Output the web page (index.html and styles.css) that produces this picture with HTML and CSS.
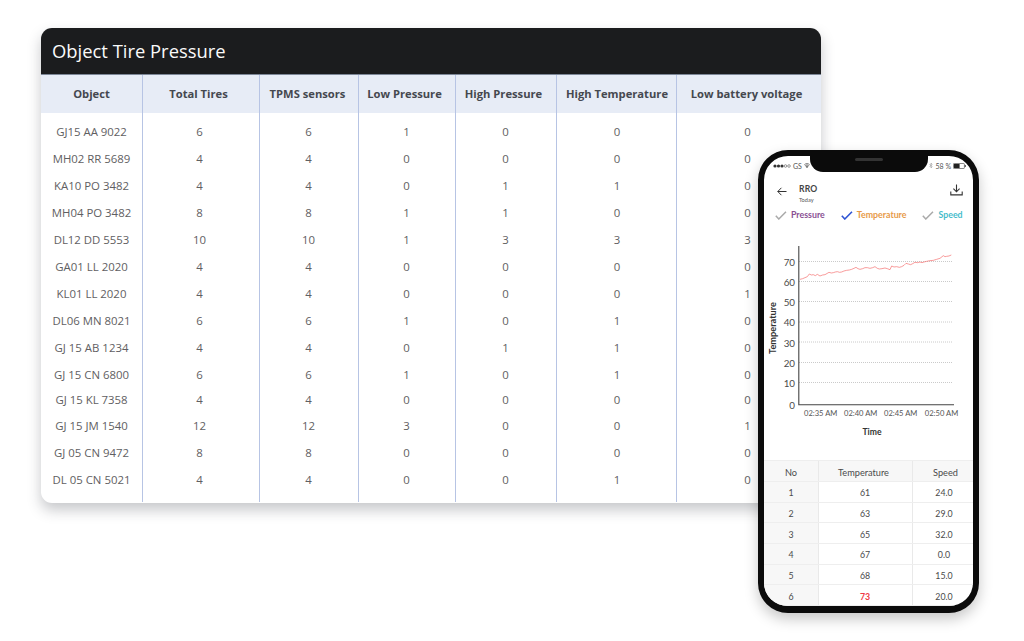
FILE: index.html
```html
<!DOCTYPE html>
<html lang="en">
<head>
<meta charset="utf-8">
<title>Object Tire Pressure</title>
<link rel="stylesheet" href="styles.css">
</head>
<body>
<main class="stage">
  <section class="card">
    <h1 class="card-title">Object Tire Pressure</h1>
    <div class="row head">
      <div>Object</div><div>Total Tires</div><div>TPMS sensors</div><div>Low Pressure</div><div>High Pressure</div><div>High Temperature</div><div>Low battery voltage</div>
    </div>
    <div class="row first"><div>GJ15 AA 9022</div><div>6</div><div>6</div><div>1</div><div>0</div><div>0</div><div>0</div></div>
    <div class="row"><div>MH02 RR 5689</div><div>4</div><div>4</div><div>0</div><div>0</div><div>0</div><div>0</div></div>
    <div class="row"><div>KA10 PO 3482</div><div>4</div><div>4</div><div>0</div><div>1</div><div>1</div><div>0</div></div>
    <div class="row"><div>MH04 PO 3482</div><div>8</div><div>8</div><div>1</div><div>1</div><div>0</div><div>0</div></div>
    <div class="row"><div>DL12 DD 5553</div><div>10</div><div>10</div><div>1</div><div>3</div><div>3</div><div>3</div></div>
    <div class="row"><div>GA01 LL 2020</div><div>4</div><div>4</div><div>0</div><div>0</div><div>0</div><div>0</div></div>
    <div class="row"><div>KL01 LL 2020</div><div>4</div><div>4</div><div>0</div><div>0</div><div>0</div><div>1</div></div>
    <div class="row"><div>DL06 MN 8021</div><div>6</div><div>6</div><div>1</div><div>0</div><div>1</div><div>0</div></div>
    <div class="row"><div>GJ 15 AB 1234</div><div>4</div><div>4</div><div>0</div><div>1</div><div>1</div><div>0</div></div>
    <div class="row snug"><div>GJ 15 CN 6800</div><div>6</div><div>6</div><div>1</div><div>0</div><div>1</div><div>0</div></div>
    <div class="row tight"><div>GJ 15 KL 7358</div><div>4</div><div>4</div><div>0</div><div>0</div><div>0</div><div>0</div></div>
    <div class="row snug"><div>GJ 15 JM 1540</div><div>12</div><div>12</div><div>3</div><div>0</div><div>0</div><div>1</div></div>
    <div class="row roomy"><div>GJ 05 CN 9472</div><div>8</div><div>8</div><div>0</div><div>0</div><div>0</div><div>0</div></div>
    <div class="row last"><div>DL 05 CN 5021</div><div>4</div><div>4</div><div>0</div><div>0</div><div>1</div><div>0</div></div>
  </section>

  <aside class="phone">
    <div class="notch"><span class="speaker"></span></div>
    <div class="status">
      <div class="status-side">
        <svg class="signal" viewBox="0 0 18 4" width="18" height="4"><circle cx="2" cy="2" r="1.6" fill="#333"/><circle cx="5.5" cy="2" r="1.6" fill="#333"/><circle cx="9" cy="2" r="1.6" fill="#333"/><circle cx="12.5" cy="2" r="1.3" fill="none" stroke="#555" stroke-width=".6"/><circle cx="16" cy="2" r="1.3" fill="none" stroke="#555" stroke-width=".6"/></svg>
        <span>GS</span>
        <svg viewBox="0 0 6 5" width="6" height="5"><path d="M0.3 1.8C1.9.2 4.1.2 5.7 1.8M1.2 2.8c1-1 2.6-1 3.6 0M3 4.8 2 3.6c.6-.4 1.4-.4 2 0z" fill="none" stroke="#444" stroke-width=".7"/></svg>
      </div>
      <div class="status-side">
        <svg viewBox="0 0 4 7" width="4" height="7"><path d="M.5 2 3.2 4.8 2 6V1l1.2 1.2L.5 5" fill="none" stroke="#999" stroke-width=".6"/></svg>
        <span>58 %</span>
        <svg viewBox="0 0 13 6" width="13" height="6"><rect x=".4" y=".4" width="11" height="5.2" rx="1" fill="none" stroke="#444" stroke-width=".7"/><rect x="1" y="1" width="5.6" height="4" fill="#222"/><rect x="11.8" y="2" width="1" height="2" fill="#444"/></svg>
      </div>
    </div>
    <header class="bar">
      <svg class="back" viewBox="0 0 10 9" width="10" height="9"><path d="M9.5 4.5H.8M4.4.8.8 4.5l3.6 3.7" fill="none" stroke="#333" stroke-width="1"/></svg>
      <div class="bar-title"><strong>RRO</strong><small>Today</small></div>
      <svg class="download" viewBox="0 0 13 12" width="13" height="12"><path d="M6.5.5v7M3.4 4.6l3.1 3.2 3.1-3.2M.8 7.6v3.3h11.4V7.6" fill="none" stroke="#333" stroke-width="1.1"/></svg>
    </header>
    <div class="legend">
      <div class="legend-item">
        <svg viewBox="0 0 12 9" width="12" height="9"><path d="M.8 4.8 3.8 8l7.2-7.2" fill="none" stroke="#aaa" stroke-width="1.5"/></svg>
        <span class="c-pressure">Pressure</span>
      </div>
      <div class="legend-item">
        <svg viewBox="0 0 12 9" width="12" height="9"><path d="M.8 4.8 3.8 8l7.2-7.2" fill="none" stroke="#2f55d4" stroke-width="1.6"/></svg>
        <span class="c-temp">Temperature</span>
      </div>
      <div class="legend-item">
        <svg viewBox="0 0 12 9" width="12" height="9"><path d="M.8 4.8 3.8 8l7.2-7.2" fill="none" stroke="#aaa" stroke-width="1.5"/></svg>
        <span class="c-speed">Speed</span>
      </div>
    </div>
    <svg class="chart" viewBox="764 236 209 224" width="209" height="224">
      <g class="grid">
        <line x1="799" x2="953" y1="261.5" y2="261.5"/>
        <line x1="799" x2="953" y1="281.5" y2="281.5"/>
        <line x1="799" x2="953" y1="301.5" y2="301.5"/>
        <line x1="799" x2="953" y1="322" y2="322"/>
        <line x1="799" x2="953" y1="342" y2="342"/>
        <line x1="799" x2="953" y1="362.5" y2="362.5"/>
        <line x1="799" x2="953" y1="382.5" y2="382.5"/>
      </g>
      <path class="axis" d="M798.8 246V404.8H954"/>
      <g transform="translate(750 240) scale(.3333)">
        <polyline class="trace" points="150,118 158,116 165,113 172,110 178,102 184,105 190,104 196,107 202,103 210,108 218,105 225,104 237,97 244,99 250,98 256,96 262,95 269,97 275,96 282,93 290,91 298,90 305,88 312,85 318,82 324,86 330,88 338,86 345,83 352,83 360,85 368,83 375,80 382,85 388,87 396,86 405,84 412,86 420,89 425,78 432,81 440,80 448,82 455,80 462,76 468,70 475,72 482,74 488,71 495,67 503,68 510,66 516,68 522,66 530,64 540,62 550,61 560,58 570,55 580,47 585,50 590,49 597,48 604,45"/>
      </g>
      <g class="y-labels">
        <text x="795" y="265.5">70</text>
        <text x="795" y="285.5">60</text>
        <text x="795" y="306">50</text>
        <text x="795" y="326">40</text>
        <text x="795" y="346.5">30</text>
        <text x="795" y="366.5">20</text>
        <text x="795" y="387">10</text>
        <text x="795" y="409">0</text>
      </g>
      <g class="x-labels">
        <text x="820.7" y="415.5">02:35 AM</text>
        <text x="860.7" y="415.5">02:40 AM</text>
        <text x="900.7" y="415.5">02:45 AM</text>
        <text x="941.5" y="415.5">02:50 AM</text>
      </g>
      <text class="axis-title" x="872" y="435">Time</text>
      <text class="axis-title axis-title-y" transform="translate(776 328) rotate(-90)">Temperature</text>
    </svg>
    <div class="mini">
      <div class="mini-row mini-head"><div>No</div><div>Temperature</div><div>Speed</div></div>
      <div class="mini-row"><div>1</div><div>61</div><div>24.0</div></div>
      <div class="mini-row"><div>2</div><div>63</div><div>29.0</div></div>
      <div class="mini-row"><div>3</div><div>65</div><div>32.0</div></div>
      <div class="mini-row"><div>4</div><div>67</div><div>0.0</div></div>
      <div class="mini-row"><div>5</div><div>68</div><div>15.0</div></div>
      <div class="mini-row"><div>6</div><div class="alert">73</div><div>20.0</div></div>
    </div>
  </aside>
</main>
</body>
</html>
```
FILE: styles.css
```css
* { box-sizing: border-box; }
html, body { margin: 0; height: 100%; background: #fff; overflow: hidden; }
.stage { position: relative; width: 1024px; height: 641px; padding: 28px 0 0 41px; font-family: "Open Sans", sans-serif; }

.card { width: 780px; height: 475px; background: #fff; border-radius: 11px; box-shadow: 0 7px 14px rgba(40, 44, 56, .26); overflow: hidden; }
.card-title { margin: 0; height: 47px; padding-left: 11px; background: #1b1c1e; color: #fafafa; font-size: 18.4px; font-weight: 500; line-height: 45px; border-bottom: 1px solid #7d8797; }

.row { display: grid; grid-template-columns: 102px 117px 99px 97px 101px 120px 144px; height: 27px; font-size: 11.4px; color: #5f6062; }
.row > div { display: flex; align-items: center; justify-content: center; border-right: 1px solid #b7c4e4; padding-right: 1px; }
.row > div:first-child { padding-right: 0; }
.row > div:nth-child(2) { padding-right: 3px; }
.row > div:nth-child(6) { padding-right: 0; padding-left: 1px; }
.row > div:last-child { border-right: 0; padding-right: 3px; }
.head { height: 38px; background: #e7ecf6; font-weight: 700; font-size: 11.2px; color: #45484f; }
.head > div { padding: 0 5px 1px 0; }
.head > div:first-child { padding: 0 0 1px; }
.head > div:nth-child(2) { padding: 0 5px 1px 0; }
.head > div:nth-child(3) { padding: 0 3px 1px 0; }
.head > div:nth-child(6) { padding: 0 0 1px 1px; }
.head > div:last-child { padding: 0 5px 1px 0; }
.first { height: 32px; }
.first > div { padding-top: 5px; }
.tight { height: 25px; }
.snug { height: 26px; }
.roomy > div { padding-top: 1px; }
.last { height: 37px; }
.last > div { padding-bottom: 9px; }

.phone { position: absolute; left: 758px; top: 150px; width: 221px; height: 463px; display: flex; flex-direction: column; background: #fff; border: 6px solid #0b0b0b; border-bottom-width: 7px; border-radius: 30px; overflow: hidden; box-shadow: 0 6px 14px rgba(0, 0, 0, .22); font-family: Lato, sans-serif; color: #444; }
.notch { position: absolute; left: 46px; top: -1px; width: 118px; height: 17px; display: flex; justify-content: center; padding-top: 3px; background: #0b0b0b; border-radius: 0 0 13px 13px; }
.speaker { width: 28px; height: 3px; border-radius: 2px; background: #333; }

.status { flex: none; height: 19px; display: flex; justify-content: space-between; align-items: center; padding: 0 7px 0 9px; font-size: 7px; color: #555; }
.status-side { display: flex; align-items: center; gap: 2px; }

.bar { flex: none; height: 30px; display: flex; align-items: flex-start; padding: 10px 10px 0 13px; }
.back { margin-top: 2px; }
.bar-title { flex: 1; display: flex; flex-direction: column; padding-left: 12px; margin-top: -1px; }
.bar-title strong { font-size: 8.6px; line-height: 11px; color: #444; letter-spacing: .2px; }
.bar-title small { font-size: 5.6px; line-height: 9px; color: #555; }
.download { margin-top: -1px; }

.legend { flex: none; height: 31px; display: flex; gap: 16px; align-items: flex-start; padding: 4px 0 0 11px; font-size: 8.8px; font-weight: 700; white-space: nowrap; }
.legend-item { display: flex; align-items: center; gap: 4px; }
.legend-item svg { margin-top: 2px; }
.c-pressure { color: #8a4f93; }
.c-temp { color: #e79a48; }
.c-speed { color: #46bccb; }

.chart { flex: none; display: block; }
.grid line { stroke: #bdbdbd; stroke-width: .8; stroke-dasharray: 1 1; }
.axis { fill: none; stroke: #444; stroke-width: 1.1; }
.trace { fill: none; stroke: #f46a6a; stroke-width: 2; }
.y-labels text { font-size: 9.8px; fill: #4a4a4a; text-anchor: end; }
.x-labels text { font-size: 7.6px; fill: #555; text-anchor: middle; }
.axis-title { font-size: 8.6px; font-weight: 700; fill: #333; text-anchor: middle; }
.axis-title-y { font-size: 9.2px; }

.mini { flex: none; font-size: 8.8px; color: #4a4a4a; }
.mini-row { display: grid; grid-template-columns: 55px 94px 60px; height: 20.7px; border-bottom: 1px solid #eee; }
.mini-row > div { display: flex; align-items: center; justify-content: center; border-right: 1px solid #e9e9e9; padding-top: 2px; }
.mini-row > div:first-child { background: #f7f7f7; }
.mini-row > div:nth-child(2) { padding-right: 1px; }
.mini-row > div:last-child { border-right: 0; padding-left: 2px; }
.mini-head { height: 22px; border-top: 1px solid #eee; background: #f7f7f7; font-size: 9.2px; }
.mini-head > div:nth-child(2) { padding-right: 4px; }
.mini-head > div:last-child { padding-left: 5px; }
.alert { color: #ef3b46; font-weight: 700; }
```
